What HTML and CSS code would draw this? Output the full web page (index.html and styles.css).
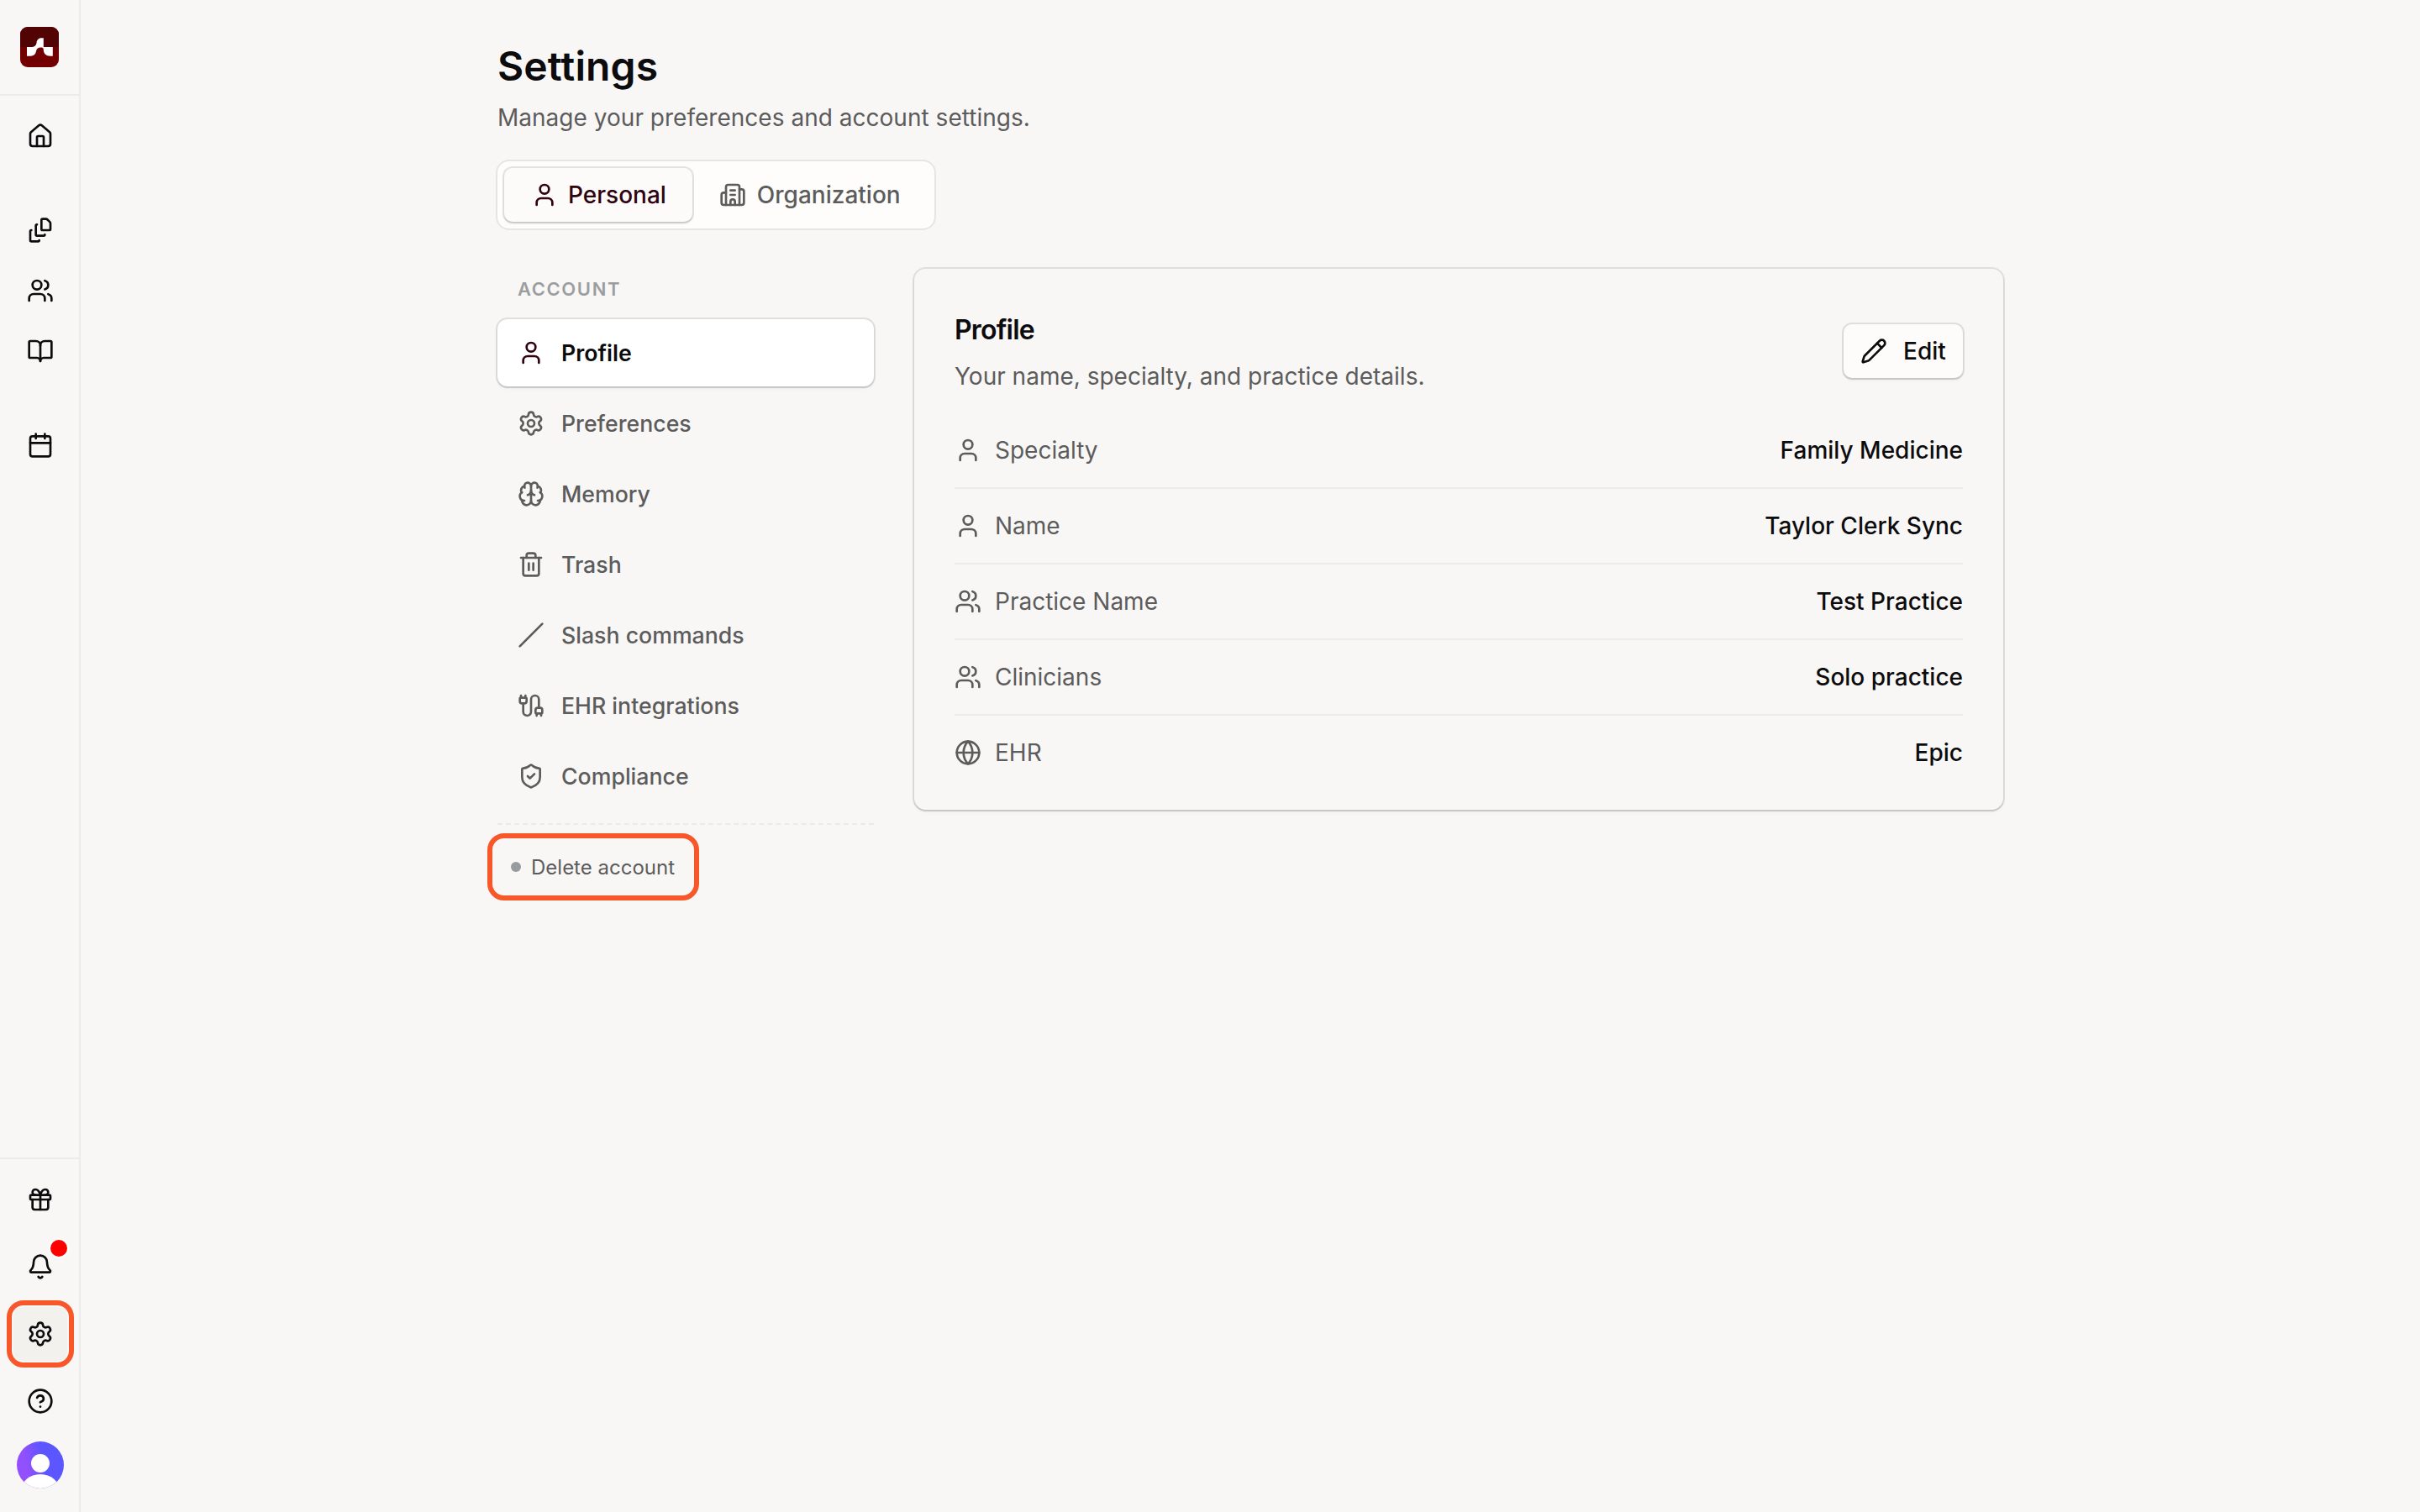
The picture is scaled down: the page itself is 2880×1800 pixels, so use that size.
FILE: index.html
```
<!DOCTYPE html>
<html lang="en">

<head>
  <meta charset="UTF-8">
  <title>Settings</title>
  <link rel="stylesheet" href="styles.css">
</head>

<body>

  <!-- icon sprite -->
  <svg class="sprite">
    <symbol id="user" viewBox="0 0 24 24">
      <path d="M19 21v-2a4 4 0 0 0-4-4H9a4 4 0 0 0-4 4v2" />
      <circle cx="12" cy="7" r="4" />
    </symbol>
    <symbol id="users" viewBox="0 0 24 24">
      <path d="M16 21v-2a4 4 0 0 0-4-4H6a4 4 0 0 0-4 4v2" />
      <path d="M16 3.128a4 4 0 0 1 0 7.744" />
      <path d="M22 21v-2a4 4 0 0 0-3-3.87" />
      <circle cx="9" cy="7" r="4" />
    </symbol>
    <symbol id="gear" viewBox="0 0 24 24">
      <path d="M9.671 4.136a2.34 2.34 0 0 1 4.659 0 2.34 2.34 0 0 0 3.319 1.915 2.34 2.34 0 0 1 2.33 4.033 2.34 2.34 0 0 0 0 3.831 2.34 2.34 0 0 1-2.33 4.033 2.34 2.34 0 0 0-3.319 1.915 2.34 2.34 0 0 1-4.659 0 2.34 2.34 0 0 0-3.32-1.915 2.34 2.34 0 0 1-2.33-4.033 2.34 2.34 0 0 0 0-3.831A2.34 2.34 0 0 1 6.35 6.051a2.34 2.34 0 0 0 3.319-1.915" />
      <circle cx="12" cy="12" r="3" />
    </symbol>
  </svg>

  <aside class="sidebar">
    <div class="brand">
      <svg class="logo" viewBox="0 0 46 48">
        <rect width="46" height="48" rx="9" fill="#730000" />
        <path d="M0 24V9a9 9 0 0 1 9-9h28a9 9 0 0 1 9 9v15z" fill="#520404" />
        <path d="M8 24h5c4 0 6-1.500 6.500-5 .5-3.800 2.500-5.700 6.500-5.700h1.800V24h11v10.700h-3c-5 0-8-3-8-7.500C27.800 25 26.500 24.500 24.500 24.500c-3.500 0-5 1.500-5.500 4.500-.6 3.800-3 5.700-6.500 5.700H8z" fill="#fff" />
      </svg>
    </div>

    <nav class="menu">
      <a class="menu-item"><svg class="icon" viewBox="0 0 24 24">
        <path d="M15 21v-8a1 1 0 0 0-1-1h-4a1 1 0 0 0-1 1v8" />
        <path d="M3 10a2 2 0 0 1 .709-1.528l7-5.999a2 2 0 0 1 2.582 0l7 5.999A2 2 0 0 1 21 10v9a2 2 0 0 1-2 2H5a2 2 0 0 1-2-2z" />
      </svg></a>
      <a class="menu-item spaced"><svg class="icon" viewBox="0 0 24 24">
        <path d="M11 21a1 1 0 0 1-1 1H4a1 1 0 0 1-1-1v-8a1 1 0 0 1 1-1" />
        <path d="M16 16a1 1 0 0 1-1 1H9a1 1 0 0 1-1-1V8a1 1 0 0 1 1-1" />
        <path d="M21 6a2 2 0 0 0-.586-1.414l-2-2A2 2 0 0 0 17 2h-3a1 1 0 0 0-1 1v8a1 1 0 0 0 1 1h6a1 1 0 0 0 1-1z" />
      </svg></a>
      <a class="menu-item"><svg class="icon"><use href="#users" /></svg></a>
      <a class="menu-item"><svg class="icon" viewBox="0 0 24 24">
        <path d="M12 7v14" />
        <path d="M3 18a1 1 0 0 1-1-1V4a1 1 0 0 1 1-1h5a4 4 0 0 1 4 4 4 4 0 0 1 4-4h5a1 1 0 0 1 1 1v13a1 1 0 0 1-1 1h-6a3 3 0 0 0-3 3 3 3 0 0 0-3-3z" />
      </svg></a>
      <a class="menu-item spaced"><svg class="icon" viewBox="0 0 24 24">
        <path d="M8 2v4M16 2v4M3 10h18" />
        <rect width="18" height="18" x="3" y="4" rx="2" />
      </svg></a>
    </nav>

    <div class="menu-bottom">
      <a class="menu-item"><svg class="icon" viewBox="0 0 24 24">
        <rect x="3" y="8" width="18" height="4" rx="1" />
        <path d="M12 8v13" />
        <path d="M19 12v7a2 2 0 0 1-2 2H7a2 2 0 0 1-2-2v-7" />
        <path d="M7.500 8a2.500 2.500 0 0 1 0-5A4.800 8 0 0 1 12 8a4.800 8 0 0 1 4.500-5 2.500 2.500 0 0 1 0 5" />
      </svg></a>
      <a class="menu-item"><svg class="icon" viewBox="0 0 24 24">
        <path d="M10.268 21a2 2 0 0 0 3.464 0" />
        <path d="M3.262 15.326A1 1 0 0 0 4 17h16a1 1 0 0 0 .740-1.673C19.410 13.956 18 12.499 18 8A6 6 0 0 0 6 8c0 4.499-1.411 5.956-2.738 7.326" />
      </svg><span class="alert-dot"></span></a>
      <a class="menu-item active"><svg class="icon"><use href="#gear" /></svg></a>
      <a class="menu-item"><svg class="icon" viewBox="0 0 24 24">
        <circle cx="12" cy="12" r="10" />
        <path d="M9.090 9a3 3 0 0 1 5.830 1c0 2-3 3-3 3" />
        <path d="M12 17h.01" />
      </svg></a>
      <svg class="avatar" viewBox="0 0 56 56">
        <defs>
          <linearGradient id="avatar-bg" x1="0" y1="0.6" x2="1" y2="0.4">
            <stop offset="0.2" stop-color="#9350ff" />
            <stop offset="0.6" stop-color="#5b56ff" />
          </linearGradient>
          <clipPath id="avatar-clip"><circle cx="28" cy="28" r="28" /></clipPath>
        </defs>
        <g clip-path="url(#avatar-clip)">
          <rect width="56" height="56" fill="url(#avatar-bg)" />
          <circle cx="28" cy="26" r="11" fill="#fff" />
          <ellipse cx="28" cy="59" rx="23" ry="20" fill="#fff" />
        </g>
      </svg>
    </div>
  </aside>

  <main class="page">
    <h1>Settings</h1>
    <p class="lead">Manage your preferences and account settings.</p>

    <div class="tabs">
      <button class="tab selected"><svg class="icon"><use href="#user" /></svg><span>Personal</span></button>
      <button class="tab"><svg class="icon" viewBox="0 0 24 24">
        <path d="M10 12h4M10 8h4" />
        <path d="M14 21v-3a2 2 0 0 0-4 0v3" />
        <path d="M6 10H4a2 2 0 0 0-2 2v7a2 2 0 0 0 2 2h16a2 2 0 0 0 2-2V9a2 2 0 0 0-2-2h-2" />
        <path d="M6 21V5a2 2 0 0 1 2-2h8a2 2 0 0 1 2 2v16" />
      </svg><span>Organization</span></button>
    </div>

    <div class="columns">
      <nav class="settings-nav">
        <h2>ACCOUNT</h2>
        <a class="nav-item selected"><svg class="icon"><use href="#user" /></svg>Profile</a>
        <a class="nav-item"><svg class="icon"><use href="#gear" /></svg>Preferences</a>
        <a class="nav-item"><svg class="icon" viewBox="0 0 24 24">
          <path d="M12 18V5" />
          <path d="M15 13a4.170 4.170 0 0 1-3-4 4.170 4.170 0 0 1-3 4" />
          <path d="M17.598 6.500A3 3 0 1 0 12 5a3 3 0 1 0-5.598 1.500" />
          <path d="M17.997 5.125a4 4 0 0 1 2.526 5.770" />
          <path d="M18 18a4 4 0 0 0 2-7.464" />
          <path d="M19.967 17.483A4 4 0 1 1 12 18a4 4 0 1 1-7.967-.517" />
          <path d="M6 18a4 4 0 0 1-2-7.464" />
          <path d="M6.003 5.125a4 4 0 0 0-2.526 5.770" />
        </svg>Memory</a>
        <a class="nav-item"><svg class="icon" viewBox="0 0 24 24">
          <path d="M10 11v6M14 11v6" />
          <path d="M19 6v14a2 2 0 0 1-2 2H7a2 2 0 0 1-2-2V6" />
          <path d="M3 6h18" />
          <path d="M8 6V4a2 2 0 0 1 2-2h4a2 2 0 0 1 2 2v2" />
        </svg>Trash</a>
        <a class="nav-item"><svg class="icon" viewBox="0 0 24 24"><path d="M22 2 2 22" /></svg>Slash commands</a>
        <a class="nav-item"><svg class="icon" viewBox="0 0 24 24">
          <path d="M17 19a1 1 0 0 1-1-1v-2a2 2 0 0 1 2-2h2a2 2 0 0 1 2 2v2a1 1 0 0 1-1 1z" />
          <path d="M17 21v-2" />
          <path d="M19 14V6.500a1 1 0 0 0-7 0v11a1 1 0 0 1-7 0V10" />
          <path d="M21 21v-2" />
          <path d="M3 5V3" />
          <path d="M4 10a2 2 0 0 1-2-2V6a1 1 0 0 1 1-1h4a1 1 0 0 1 1 1v2a2 2 0 0 1-2 2z" />
          <path d="M7 5V3" />
        </svg>EHR integrations</a>
        <a class="nav-item"><svg class="icon" viewBox="0 0 24 24">
          <path d="M20 13c0 5-3.500 7.500-7.660 8.950a1 1 0 0 1-.670-.010C7.500 20.500 4 18 4 13V6a1 1 0 0 1 1-1c2 0 4.500-1.200 6.240-2.720a1.170 1.170 0 0 1 1.520 0C14.510 3.810 17 5 19 5a1 1 0 0 1 1 1z" />
          <path d="m9 12 2 2 4-4" />
        </svg>Compliance</a>
        <div class="danger">
          <a class="delete">Delete account</a>
        </div>
      </nav>

      <section class="card">
        <header>
          <div>
            <h3>Profile</h3>
            <p>Your name, specialty, and practice details.</p>
          </div>
          <button class="edit"><svg class="icon" viewBox="0 0 24 24">
            <path d="M21.174 6.812a1 1 0 0 0-3.986-3.987L3.842 16.174a2 2 0 0 0-.5.830l-1.321 4.352a.5.5 0 0 0 .623.622l4.353-1.320a2 2 0 0 0 .830-.497z" />
            <path d="m15 5 4 4" />
          </svg>Edit</button>
        </header>
        <dl>
          <div class="row">
            <dt><svg class="icon"><use href="#user" /></svg>Specialty</dt>
            <dd>Family Medicine</dd>
          </div>
          <div class="row">
            <dt><svg class="icon"><use href="#user" /></svg>Name</dt>
            <dd>Taylor Clerk Sync</dd>
          </div>
          <div class="row">
            <dt><svg class="icon"><use href="#users" /></svg>Practice Name</dt>
            <dd>Test Practice</dd>
          </div>
          <div class="row">
            <dt><svg class="icon"><use href="#users" /></svg>Clinicians</dt>
            <dd>Solo practice</dd>
          </div>
          <div class="row">
            <dt><svg class="icon" viewBox="0 0 24 24">
              <circle cx="12" cy="12" r="10" />
              <path d="M12 2a14.500 14.500 0 0 0 0 20 14.500 14.500 0 0 0 0-20" />
              <path d="M2 12h20" />
            </svg>EHR</dt>
            <dd>Epic</dd>
          </div>
        </dl>
      </section>
    </div>
  </main>

</body>

</html>
```
FILE: styles.css
```
:root {
  --bg: #f9f7f6;
  --line: #ebebeb;
  --text: #0c0c0e;
  --muted: #5c5c5c;
  --wine: #2f0410;
  --mark: #f8572a;
  --ring: 0 0 0 2px rgba(0, 0, 0, 0.1), 0 2px 2px rgba(0, 0, 0, 0.1), 0 4px 4px rgba(0, 0, 0, 0.02);
}

* {
  box-sizing: border-box;
}

body {
  margin: 0;
  display: flex;
  height: 1800px;
  background: var(--bg);
  color: var(--text);
  font-family: Inter, sans-serif;
  font-size: 28px;
  overflow: hidden;
}

h1, h2, h3, p, dl, dd {
  margin: 0;
}

button {
  border: 0;
  font: inherit;
  font-weight: 500;
}

.sprite {
  position: absolute;
  width: 0;
  height: 0;
}

.icon {
  flex: none;
  width: 32px;
  height: 32px;
  fill: none;
  stroke: currentColor;
  stroke-width: 2;
  stroke-linecap: round;
  stroke-linejoin: round;
}

/* left rail */

.sidebar {
  flex: none;
  display: flex;
  flex-direction: column;
  width: 96px;
  border-right: 2px solid var(--line);
}

.brand {
  height: 114px;
  padding: 32px 0 0 24px;
  border-bottom: 2px solid var(--line);
}

.logo {
  display: block;
  width: 46px;
  height: 48px;
}

.menu {
  display: flex;
  flex-direction: column;
  gap: 8px;
  padding: 16px 0 0 16px;
}

.menu-item {
  position: relative;
  display: flex;
  align-items: center;
  justify-content: center;
  width: 64px;
  height: 64px;
}

.menu-item.spaced {
  margin-top: 40px;
}

.menu-bottom {
  display: flex;
  flex-direction: column;
  gap: 16px;
  margin-top: auto;
  padding: 16px 0 28px 16px;
  border-top: 2px solid var(--line);
}

.menu-item.active {
  border-radius: 12px;
  background: #f2f1ee;
  outline: 6px solid var(--mark);
  outline-offset: 2px;
}

.alert-dot {
  position: absolute;
  top: 0;
  right: 0;
  width: 20px;
  height: 20px;
  border-radius: 50%;
  background: #f00;
  box-shadow: 0 0 0 2px #fff;
}

.avatar {
  width: 56px;
  height: 56px;
  margin-left: 4px;
}

/* settings page */

.page {
  width: 1792px;
  margin-left: 496px;
  padding-top: 49px;
}

h1 {
  font-size: 48px;
  font-weight: 600;
  line-height: 60px;
  letter-spacing: 0.1px;
}

.lead {
  margin-top: 11px;
  line-height: 40px;
  letter-spacing: 0.02px;
  color: var(--muted);
}

.tabs {
  display: flex;
  width: 520px;
  height: 80px;
  margin-top: 32px;
  padding: 8px;
  border-radius: 14px;
  background: #fefdfc;
  box-shadow: 0 0 0 2px #e6e5e4;
}

.tab {
  display: flex;
  align-items: center;
  gap: 13px;
  padding: 0 32px;
  border-radius: 10px;
  background: none;
  color: var(--muted);
}

.tab.selected {
  gap: 12px;
  padding-right: 31px;
  background: #fcfbfa;
  color: var(--wine);
  box-shadow: var(--ring);
}

.columns {
  display: flex;
  align-items: flex-start;
  gap: 48px;
  margin-top: 48px;
}

.settings-nav {
  display: flex;
  flex-direction: column;
  gap: 4px;
  width: 448px;
}

.settings-nav h2 {
  height: 56px;
  padding-left: 24px;
  font-size: 22px;
  font-weight: 600;
  line-height: 48px;
  letter-spacing: 1.6px;
  color: #9b9e9f;
}

.nav-item {
  display: flex;
  align-items: center;
  gap: 20px;
  height: 80px;
  padding: 0 24px;
  border-radius: 12px;
  font-size: 26.7px;
  font-weight: 500;
  color: var(--muted);
}

.nav-item.selected {
  background: #fff;
  color: var(--text);
  font-weight: 600;
  box-shadow: var(--ring);
}

.nav-item.selected .icon {
  color: var(--wine);
}

.danger {
  margin-top: 12px;
  padding-top: 22px;
  border-top: 2px dashed #ebeae9;
}

.delete {
  display: flex;
  align-items: center;
  gap: 12px;
  width: 228px;
  height: 56px;
  padding-left: 16px;
  border-radius: 8px;
  outline: 6px solid var(--mark);
  outline-offset: 6px;
  font-size: 24px;
  color: var(--muted);
  white-space: nowrap;
}

.delete::before {
  content: "";
  width: 12px;
  height: 12px;
  border-radius: 50%;
  background: #999c9f;
}

.card {
  width: 1296px;
  height: 644px;
  padding: 48px 48px 24px;
  border-radius: 14px;
  box-shadow: var(--ring);
}

.card header {
  display: flex;
  justify-content: space-between;
  height: 124px;
}

.card h3 {
  font-size: 32px;
  font-weight: 600;
  line-height: 50px;
  letter-spacing: -0.8px;
}

.card p {
  margin-top: 10px;
  line-height: 40px;
  color: var(--muted);
}

.edit {
  display: flex;
  align-items: center;
  gap: 19px;
  width: 142px;
  height: 64px;
  margin-top: 18px;
  padding: 0 20px;
  border-radius: 10px;
  background: #fdfcfb;
  color: var(--text);
  box-shadow: var(--ring);
}

.row {
  display: flex;
  align-items: center;
  justify-content: space-between;
  height: 90px;
  border-bottom: 2px solid #ecebea;
}

.row:last-child {
  height: 88px;
  border-bottom: 0;
}

dt {
  display: flex;
  align-items: center;
  gap: 16px;
  color: var(--muted);
}

dd {
  font-weight: 500;
}
```
